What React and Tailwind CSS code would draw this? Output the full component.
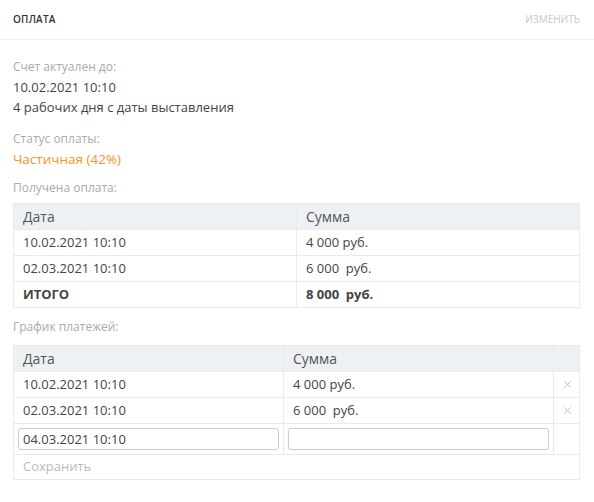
import React from 'react'

const FONT = { fontFamily: '"Open Sans", "Noto Sans", sans-serif' }

const received = [
  { date: '10.02.2021 10:10', sum: '4 000 руб.' },
  { date: '02.03.2021 10:10', sum: '6 000  руб.' },
]

const schedule = [
  { date: '10.02.2021 10:10', sum: '4 000 руб.' },
  { date: '02.03.2021 10:10', sum: '6 000  руб.' },
]

function Label({ children, className = '' }) {
  return <div className={`text-[12px] leading-[20px] text-[#aaaaaa] ${className}`}>{children}</div>
}

function Cross() {
  return (
    <svg width="9" height="9" viewBox="0 0 10 10" className="mx-auto">
      <path d="M1.5 1.5L8.5 8.5M8.5 1.5L1.5 8.5" stroke="#bdbdbd" strokeWidth="1.1" />
    </svg>
  )
}

export default function App() {
  const td = 'border border-[#e8eaed] h-[26px] px-[9px] py-0 text-left align-middle'
  const th = 'border border-[#e8eaed] h-[26px] px-[9px] py-0 text-left align-middle font-normal text-[14px] bg-[#eef1f4] text-[#555]'

  return (
    <div className="w-[594px] min-h-[502px] bg-white text-[#444]" style={FONT}>
      <div className="h-10 flex items-center justify-between pl-[13px] pr-[14px] border-b border-[#eeeeee]">
        <span className="text-[10px] font-semibold text-[#333] tracking-[0.2px]">ОПЛАТА</span>
        <span className="text-[10px] text-[#c8c8c8]">ИЗМЕНИТЬ</span>
      </div>

      <div className="px-[13px] pt-[17px] pr-[14px]">
        <Label>Счет актуален до:</Label>
        <div className="text-[13px] leading-[20px]">10.02.2021 10:10</div>
        <div className="text-[13px] leading-[20px]">4 рабочих дня с даты выставления</div>

        <Label className="mt-3">Статус оплаты:</Label>
        <div className="text-[13.5px] leading-[20px] text-[#f7931e]">Частичная (42%)</div>

        <Label className="mt-[9px]">Получена оплата:</Label>
        <table className="mt-[5px] w-full table-fixed border-collapse text-[13px]">
          <colgroup>
            <col className="w-[283px]" />
            <col />
          </colgroup>
          <thead>
            <tr>
              <th className={th}>Дата</th>
              <th className={th}>Сумма</th>
            </tr>
          </thead>
          <tbody>
            {received.map((r, i) => (
              <tr key={i}>
                <td className={td}>{r.date}</td>
                <td className={`${td} whitespace-pre`}>{r.sum}</td>
              </tr>
            ))}
            <tr>
              <td className={`${td} font-bold text-[#444]`}>ИТОГО</td>
              <td className={`${td} font-bold text-[#444] whitespace-pre`}>8 000  руб.</td>
            </tr>
          </tbody>
        </table>

        <Label className="mt-[9px]">График платежей:</Label>
        <table className="mt-[8px] w-full table-fixed border-collapse text-[13px]">
          <colgroup>
            <col className="w-[270px]" />
            <col className="w-[270px]" />
            <col />
          </colgroup>
          <thead>
            <tr>
              <th className={th}>Дата</th>
              <th className={th}>Сумма</th>
              <th className={th}></th>
            </tr>
          </thead>
          <tbody>
            {schedule.map((r, i) => (
              <tr key={i}>
                <td className={td}>{r.date}</td>
                <td className={`${td} whitespace-pre`}>{r.sum}</td>
                <td className={`${td} px-0`}>
                  <Cross />
                </td>
              </tr>
            ))}
            <tr>
              <td className="border border-[#e8eaed] p-[4px]">
                <input
                  defaultValue="04.03.2021 10:10"
                  className="block w-full h-[22px] border border-[#cccccc] rounded-[3px] px-[4px] text-[13px] text-[#444] outline-none"
                  style={FONT}
                />
              </td>
              <td className="border border-[#e8eaed] p-[4px]">
                <input
                  className="block w-full h-[22px] border border-[#cccccc] rounded-[3px] px-[4px] text-[13px] text-[#444] outline-none"
                  style={FONT}
                />
              </td>
              <td className="border border-[#e8eaed]"></td>
            </tr>
            <tr>
              <td colSpan={3} className="border border-[#e8eaed] h-[25px] px-[9px] py-0 text-[13px] text-[#bbbbbb]">
                Сохранить
              </td>
            </tr>
          </tbody>
        </table>
      </div>
    </div>
  )
}
